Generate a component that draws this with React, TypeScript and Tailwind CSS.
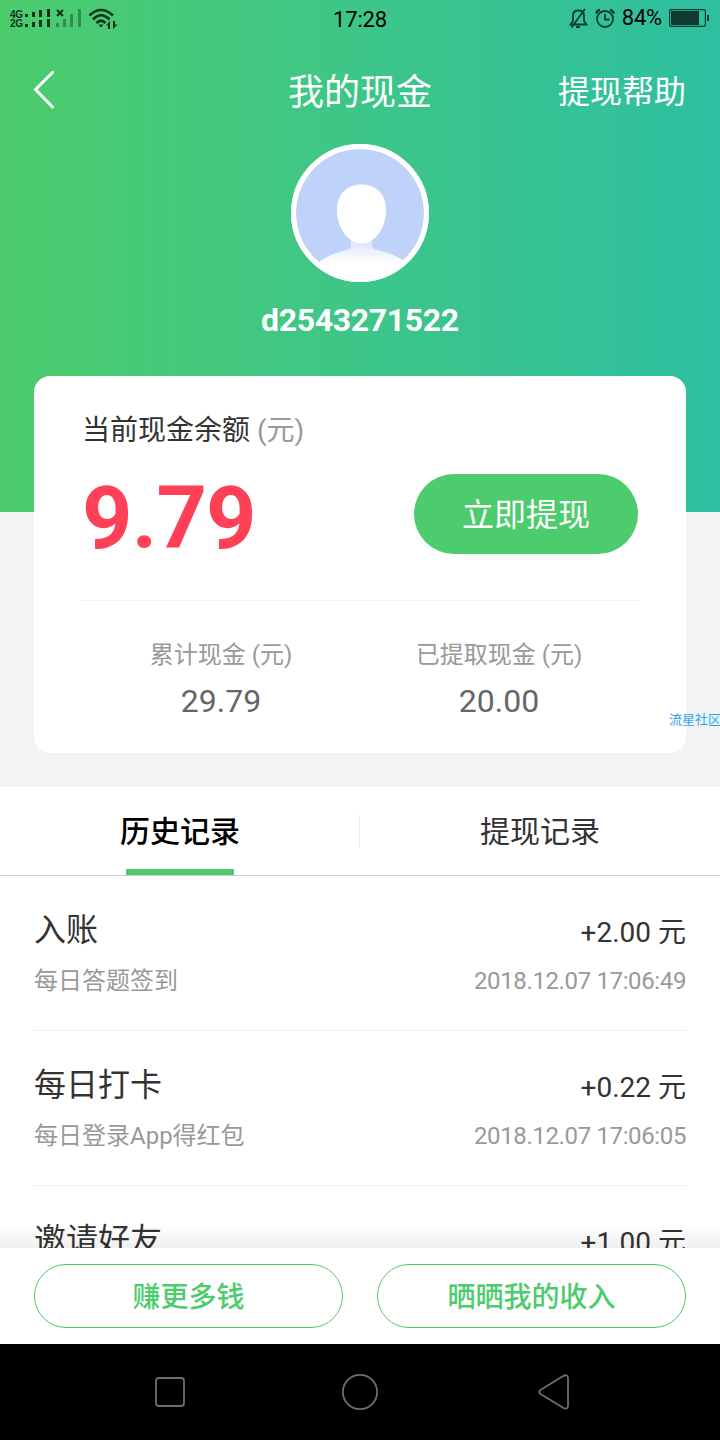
/* ------------------------------------------------------------------ */
/*  Data                                                              */
/* ------------------------------------------------------------------ */
const stats = [
  { label: '累计现金 (元)', value: '29.79' },
  { label: '已提取现金 (元)', value: '20.00' },
];

const records = [
  { title: '入账', amount: '+2.00 元', note: '每日答题签到', time: '2018.12.07 17:06:49' },
  { title: '每日打卡', amount: '+0.22 元', note: '每日登录App得红包', time: '2018.12.07 17:06:05' },
  { title: '邀请好友', amount: '+1.00 元', note: '', time: '' },
];

/* ------------------------------------------------------------------ */
/*  Status bar                                                        */
/* ------------------------------------------------------------------ */
function StatusBar() {
  return (
    <div className="grid grid-cols-3 items-start h-9 text-black">
      <div className="flex items-center h-9">
        <div className="ml-[10px] w-[14px] flex flex-col font-['Liberation_Sans'] font-bold text-[10px] leading-[9px] tracking-[-0.3px] text-[#0f3320] pt-px">
          <span>4G</span>
          <span>2G</span>
        </div>
        {/* Signal bars, two SIMs */}
        <svg width="58" height="36" viewBox="24 0 58 36" fill="#0f3320">
          <path d="M25 14h3v3h-3zM32 12h3v5h-3zM39 10h3v7h-3zM47 9h3v8h-3z" />
          <path d="M25 24h3v3h-3zM32 22h3v5h-3zM39 20h3v7h-3zM47 19h3v8h-3z" />
          <path d="M57 10l6 6M63 10l-6 6" stroke="#0f3320" strokeWidth="2" />
          <path d="M56 23h3v4h-3zM63 19h3v8h-3zM70 14h3v13h-3zM78 9h3v18h-3z" opacity="0.4" />
        </svg>
        <svg className="ml-[5px]" width="31" height="36" viewBox="87 0 31 36" fill="none" stroke="#0f3320">
          <path d="M89.500 15.500Q101 4.500 113 15.500" strokeWidth="2.6" />
          <path d="M93 19.500Q101 11 109.500 19.500" strokeWidth="2.6" />
          <path d="M96.500 23Q101 18.500 105.500 23" strokeWidth="2.6" />
          <path d="M98.500 24.500h5l-2.500 3z" fill="#0f3320" stroke="none" />
          <path d="M106 25.500l4-4.500v8h-2v-3.500zM117.500 24.500l-4.500 4.500v-8h2v3.500z" fill="#0f3320" stroke="none" />
        </svg>
      </div>
      <span className="text-center text-[22px] leading-9 tracking-[-0.2px] pt-0.5">17:28</span>
      <div className="flex items-center justify-end h-9">
        <svg width="49" height="36" viewBox="566 0 49 36" fill="none" stroke="#0f3a2f" strokeWidth="1.8">
          <path d="M569.500 24.500h16l-2.500-3.500v-5.500c0-3-2-5-5.500-5s-5.500 2-5.500 5v5.500zM584 9L570.500 27.500M575 27h4" />
          <circle cx="604" cy="19" r="8" />
          <path d="M604 14v5.500h4.500" />
          <path d="M595 13.500q1-3 4-3.500M613 13.500q-1-3-4-3.500" strokeWidth="2.400" />
        </svg>
        <span className="ml-[6px] text-[22px] leading-9 tracking-[-0.2px]">84%</span>
        <svg className="ml-[7px] mr-[11px]" width="40" height="36" viewBox="669 0 40 36">
          <rect x="669.600" y="9.600" width="35.800" height="16.800" rx="1.500" fill="none" stroke="#0f3a32" strokeWidth="1.200" />
          <rect x="671" y="11" width="28" height="14" fill="#0f3a32" />
          <rect x="707" y="15" width="2" height="6" fill="#0f3a32" />
        </svg>
      </div>
    </div>
  );
}

/* ------------------------------------------------------------------ */
/*  Green header with avatar                                          */
/* ------------------------------------------------------------------ */
function Header() {
  return (
    <header className="h-[512px] shrink-0 bg-linear-to-r from-[#4ccc6c] to-[#2dbfa0] text-white">
      <StatusBar />
      <div className="grid grid-cols-3 items-center h-[108px] px-[34px]">
        <svg width="22" height="38" viewBox="0 0 22 38" fill="none" stroke="white" strokeWidth="3" strokeLinecap="round" strokeLinejoin="round">
          <path d="M18.500 1.500L1.500 18.500L18.500 36" />
        </svg>
        <h1 className="pt-1.5 text-center text-[36px] leading-[44px]">我的现金</h1>
        <span className="pt-1 text-right text-[32px] leading-[44px]">提现帮助</span>
      </div>
      <div className="flex flex-col items-center">
        <svg width="138" height="138" viewBox="0 0 138 138">
          <defs>
            <clipPath id="avatar">
              <circle cx="69" cy="69" r="64" />
            </clipPath>
            <linearGradient id="shoulders" x1="0" y1="0" x2="0" y2="1">
              <stop offset="0" stopColor="#d5e1fb" />
              <stop offset="0.3" stopColor="#ebeffc" />
              <stop offset="0.6" stopColor="#ffffff" />
            </linearGradient>
          </defs>
          <circle cx="69" cy="69" r="69" fill="white" />
          <g clipPath="url(#avatar)">
            <rect width="138" height="138" fill="#bed2fa" />
            <path d="M60 92v9c0 3-1.500 4-5 5C43 109 33 113 26 120v19h90v-19c-7-7-17-11-29-14-3.500-1-6-2-6-5v-9z" fill="url(#shoulders)" />
            <path d="M70.500 40.500C85 40.500 95 50 95 66C95 84 84 99.500 70.500 99.500S46 84 46 66C46 50 56 40.500 70.500 40.500z" fill="white" />
          </g>
          <circle cx="69" cy="69" r="66.500" fill="none" stroke="white" strokeWidth="5" />
        </svg>
        <span className="mt-[18px] text-[32px] leading-10 font-bold tracking-[-0.35px]">d2543271522</span>
      </div>
    </header>
  );
}

/* ------------------------------------------------------------------ */
/*  Balance card                                                      */
/* ------------------------------------------------------------------ */
function BalanceCard() {
  return (
    <section className="relative -mt-[136px] mx-[34px] h-[377px] shrink-0 rounded-2xl bg-white px-12 pt-[35px]">
      <p className="text-[28px] leading-10 text-[#333]">
        当前现金余额 <span className="text-[#999]">(元)</span>
      </p>
      <div className="flex items-center justify-between h-[150px] border-b border-[#f0f0f0] pb-6">
        <span className="text-[88px] leading-none font-bold tracking-[-0.8px] text-[#ff4158] pt-[9px]">9.79</span>
        <button className="w-56 h-20 rounded-full bg-[#4ccc6c] pt-0.5 text-white text-[32px]">立即提现</button>
      </div>
      <div className="grid grid-cols-2 pt-9 text-center">
        {stats.map((stat) => (
          <div key={stat.label}>
            <p className="text-[24px] leading-9 text-[#999]">{stat.label}</p>
            <p className="mt-2 text-[32px] leading-[40px] text-[#666]">{stat.value}</p>
          </div>
        ))}
      </div>
    </section>
  );
}

/* ------------------------------------------------------------------ */
/*  Record tabs and list                                              */
/* ------------------------------------------------------------------ */
function Records() {
  return (
    <section className="mt-[34px] flex-1 min-h-0 overflow-hidden bg-white">
      <div className="flex items-center h-[89px] border-b border-[#d0d0d0] text-[30px]">
        <div className="flex-1 flex flex-col items-center justify-between h-full pt-[23px]">
          <span className="leading-[44px] font-medium text-black">历史记录</span>
          <span className="w-[108px] h-1.5 bg-[#4ccc6c]" />
        </div>
        <div className="w-px h-[33px] -ml-px bg-[#eee]" />
        <div className="flex-1 h-full pt-[23px] text-center leading-[44px] text-[#333]">提现记录</div>
      </div>
      {records.map((record) => (
        <div key={record.title} className="mx-[34px] h-[155px] border-b border-[#eee] pt-[31px]">
          <div className="flex items-start justify-between text-[#333]">
            <span className="text-[32px] leading-[46px]">{record.title}</span>
            <span className="text-[28px] leading-[46px] pt-[3px]">{record.amount}</span>
          </div>
          <div className="mt-[7px] flex items-center justify-between text-[24px] leading-9 text-[#999]">
            <span>{record.note}</span>
            <span className="tracking-[-0.37px]">{record.time}</span>
          </div>
        </div>
      ))}
    </section>
  );
}

/* ------------------------------------------------------------------ */
/*  Bottom actions and system keys                                    */
/* ------------------------------------------------------------------ */
function BottomActions() {
  return (
    <div className="relative grid grid-cols-2 gap-[34px] items-center h-24 shrink-0 px-[34px] bg-white text-[28px] font-medium text-[#4ccc6c]">
      <div className="absolute inset-x-0 bottom-full h-6 bg-linear-to-b from-black/0 to-black/6" />
      <button className="h-16 rounded-full border border-[#4ccc6c] pt-[3px]">赚更多钱</button>
      <button className="h-16 rounded-full border border-[#4ccc6c] pt-[3px]">晒晒我的收入</button>
    </div>
  );
}

function SystemKeys() {
  return (
    <nav className="flex items-center justify-between h-24 shrink-0 px-[151px] bg-black">
      <svg width="38" height="38" viewBox="0 0 38 38" fill="none" stroke="#6e6e6e" strokeWidth="1.8">
        <rect x="5" y="5" width="28" height="28" rx="3" />
      </svg>
      <svg width="38" height="38" viewBox="0 0 38 38" fill="none" stroke="#6e6e6e" strokeWidth="1.8">
        <circle cx="19" cy="19" r="17.100" />
      </svg>
      <svg className="overflow-visible" width="38" height="38" viewBox="-4 0 38 38" fill="none" stroke="#6e6e6e" strokeWidth="1.8">
        <path d="M5.500 17L28.500 2.800Q32.800 1 33 5V32.500Q32.800 36.800 28.500 35L5.500 21Q3 19 5.500 17z" />
      </svg>
    </nav>
  );
}

export default function App() {
  return (
    <div className="relative flex flex-col w-[720px] h-[1440px] overflow-hidden bg-[#f3f3f3] font-[Roboto,'Noto_Sans_CJK_SC',sans-serif]">
      <Header />
      <BalanceCard />
      <Records />
      <BottomActions />
      <SystemKeys />
      <span className="absolute left-[669px] top-[711px] whitespace-nowrap text-[13px] leading-[18px] text-[#2ba3f7]">流星社区</span>
    </div>
  );
}
